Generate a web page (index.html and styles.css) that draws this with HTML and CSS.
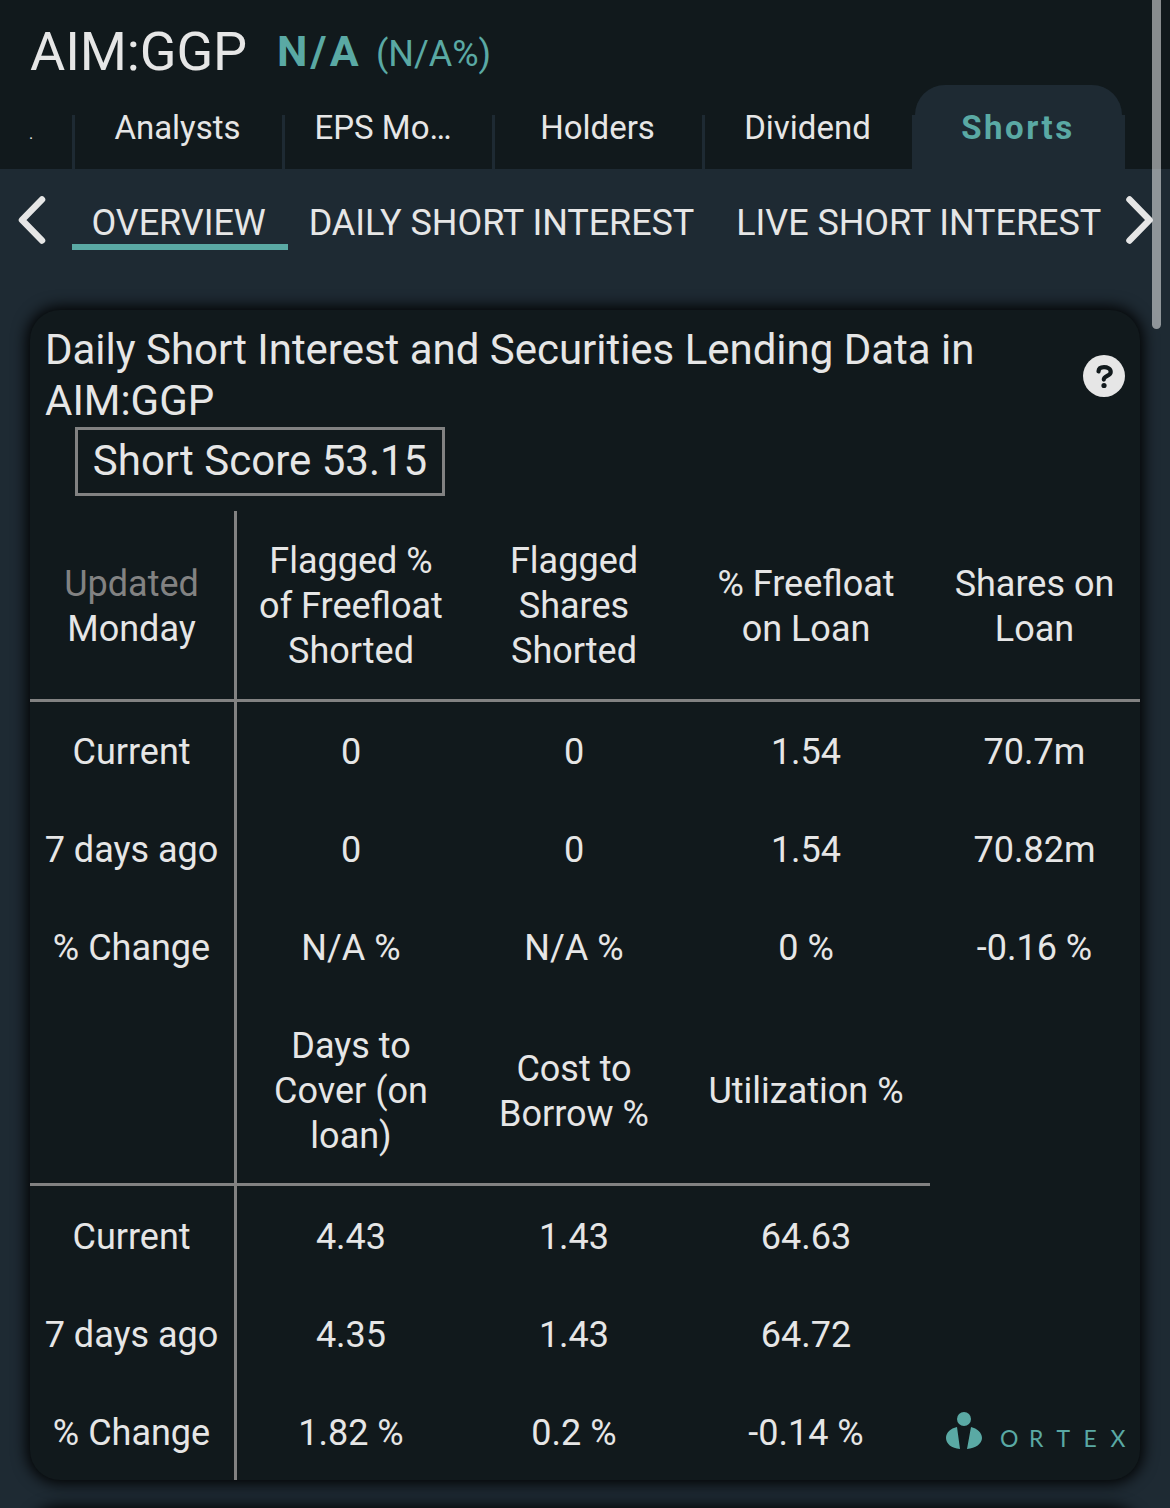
FILE: index.html
```html
<!DOCTYPE html>
<html lang="en">
<head>
<meta charset="utf-8">
<title>AIM:GGP Shorts</title>
<link rel="stylesheet" href="styles.css">
</head>
<body>
<header class="header">
  <div class="quote">
    <h1 class="ticker">AIM:GGP</h1>
    <span class="price">N/A</span>
    <span class="change">(N/A%)</span>
  </div>
  <nav class="tabs">
    <a class="tab tab-cut"><span>.</span></a>
    <a class="tab">Analysts</a>
    <a class="tab tab-eps">EPS Mo…</a>
    <a class="tab">Holders</a>
    <a class="tab">Dividend</a>
    <a class="tab tab-active"><span>Shorts</span></a>
  </nav>
</header>
<nav class="subnav">
  <svg class="arrow" width="28" height="48" viewBox="0 0 28 48"><path d="M24 3.500 4 24l20 20.500"/></svg>
  <div class="links">
    <a class="link link-active">OVERVIEW</a>
    <a class="link">DAILY SHORT INTEREST</a>
    <a class="link">LIVE SHORT INTEREST</a>
  </div>
  <svg class="arrow" width="28" height="48" viewBox="0 0 28 48"><path d="M3.500 3.500 23.500 24 3.500 44.500"/></svg>
</nav>
<main class="content">
  <section class="card">
    <div class="card-head">
      <h2 class="card-title">Daily Short Interest and Securities Lending Data in AIM:GGP</h2>
      <svg class="help" width="42" height="42" viewBox="0 0 42 42"><circle cx="21" cy="21" r="21"/><path d="M15.500 16.500c.2-3 2.300-4.300 5.500-4.300s6.700 1.400 6.700 4.700c0 4.200-6.900 3.700-6.900 7.700"/><circle class="dot" cx="21" cy="30.500" r="2.600"/></svg>
    </div>
    <div class="score">Short Score 53.15</div>
    <table class="data">
      <colgroup><col class="c1"><col class="c2"><col class="c3"><col class="c4"><col class="c5"></colgroup>
      <tbody class="group-first">
      <tr class="head"><th><span class="muted">Updated</span><br>Monday</th><th>Flagged %<br>of Freefloat<br>Shorted</th><th>Flagged<br>Shares<br>Shorted</th><th>% Freefloat<br>on Loan</th><th>Shares on<br>Loan</th></tr>
      <tr><td>Current</td><td>0</td><td>0</td><td>1.54</td><td>70.7m</td></tr>
      <tr><td>7 days ago</td><td>0</td><td>0</td><td>1.54</td><td>70.82m</td></tr>
      <tr><td>% Change</td><td>N/A %</td><td>N/A %</td><td>0 %</td><td>-0.16 %</td></tr>
      </tbody>
      <tbody class="group-second">
      <tr class="head"><th></th><th>Days to<br>Cover (on<br>loan)</th><th>Cost to<br>Borrow %</th><th>Utilization %</th></tr>
      <tr><td>Current</td><td>4.43</td><td>1.43</td><td>64.63</td></tr>
      <tr><td>7 days ago</td><td>4.35</td><td>1.43</td><td>64.72</td></tr>
      <tr><td>% Change</td><td>1.82 %</td><td>0.2 %</td><td>-0.14 %</td></tr>
      </tbody>
    </table>
    <svg class="brand" width="184" height="42" viewBox="0 0 184 42">
      <circle cx="18" cy="8" r="7"/>
      <path d="M11 16 14 38C5.500 37.500 0 32.500 0 27S4.500 17.500 11 16zM25 16 21 38C29.500 37.500 36 32.500 36 27S31 17.500 25 16z"/>
      <text y="36" x="54 83 110.500 137.500 164.500">ORTEX</text>
    </svg>
  </section>
  <section class="card card-next"></section>
</main>
<div class="scrollbar"></div>
</body>
</html>
```
FILE: styles.css
```css
* { box-sizing: border-box; }
body {
  margin: 0;
  height: 1508px;
  overflow: hidden;
  position: relative;
  background: #1e2a33;
  color: #e6e6e6;
  font-family: Roboto, "Liberation Sans", sans-serif;
  font-size: 36px;
}
h1, h2 { margin: 0; font-weight: 400; }
.header { height: 169px; background: #11191c; overflow: hidden; }
.quote { height: 85px; padding: 20px 30px 0; display: flex; align-items: flex-start; }
.ticker { font-size: 54px; line-height: 64px; letter-spacing: -.1px; }
.price { margin-left: 30px; color: #5aa9a4; font-size: 43px; line-height: 63px; font-weight: 700; letter-spacing: 3.2px; }
.change { margin-left: 14px; color: #5aa9a4; line-height: 69px; }
.tabs { display: flex; align-items: flex-end; height: 84px; }
.tab {
  width: 210px;
  height: 54px;
  flex: none;
  padding-right: 2px;
  border-right: 3px solid #1e2a33;
  text-align: center;
  font-size: 33px;
  line-height: 26px;
}
.tab-cut { width: 75px; padding-left: 29px; text-align: left; font-size: 16px; line-height: 37px; }
.tab-eps { padding-right: 11px; }
.tab:nth-child(5) { border-right: 0; width: 207px; }
.tab-active {
  width: 213px;
  height: 84px;
  padding: 0;
  border: 0;
  display: flex;
  background: linear-gradient(#1e2a33, #1e2a33) bottom / 100% 54px no-repeat;
}
.tab-active span {
  flex: 1;
  margin: 0 3px;
  padding: 30px 1px 0 0;
  border-radius: 30px 30px 0 0;
  background: #1e2a33;
  color: #5aa9a4;
  font-weight: 700;
  letter-spacing: 2.5px;
}
.subnav { height: 111px; padding: 27px 16px 0 18px; display: flex; align-items: flex-start; justify-content: space-between; }
.arrow { flex: none; fill: none; stroke: #e6e6e6; stroke-width: 6.5; stroke-linecap: round; stroke-linejoin: round; }
.links { width: 1053px; display: flex; margin: 0 1px 0 25px; }
.link { height: 54px; padding: 0 21px; line-height: 54px; white-space: nowrap; letter-spacing: -.07px; }
.link-active { padding: 0 22px 0 20px; border-bottom: 6px solid #5aa9a4; }
.content { display: grid; align-content: start; gap: 30px; height: 1228px; padding: 30px 30px 0; overflow: hidden; }
.card { position: relative; height: 1170px; border-radius: 30px; background: #11191c; box-shadow: 0 0 15px 3px #000; }
.card-next { height: 60px; }
.card-head { display: flex; justify-content: space-between; align-items: center; padding: 15px 15px 0; height: 117px; }
.card-title { width: 960px; margin-top: -2px; font-size: 42px; line-height: 51px; letter-spacing: -.02px; }
.help { fill: #e6e6e6; }
.help path { fill: none; stroke: #11191c; stroke-width: 4.2; stroke-linecap: round; }
.help .dot { fill: #11191c; }
.score { margin-left: 45px; width: 370px; height: 69px; border: 3px solid #828282; text-align: center; font-size: 42px; line-height: 61px; }
.data { margin-top: 15px; width: 1110px; table-layout: fixed; border-spacing: 0; line-height: 45px; text-align: center; }
.c1 { width: 207px; } .c2 { width: 228px; } .c3 { width: 218px; } .c4 { width: 247px; } .c5 { width: 210px; }
.data th, .data td { padding: 2px 0 0; height: 98px; font-weight: 400; vertical-align: middle; }
.data tr > :first-child { padding-right: 1px; border-right: 3px solid #828282; }
.data tr > :nth-child(4), .data tr > :nth-child(5) { padding-right: 1px; }
.data .head th { height: 191px; padding-top: 3px; border-bottom: 3px solid #828282; }
.data .group-second td { padding-top: 4px; }
.data .group-second th { height: 190px; padding-top: 4px; }
.muted { color: #828282; }
.brand { position: absolute; right: 10px; bottom: 27px; fill: #5aa9a4; font-family: Lato, sans-serif; font-size: 23px; }
.scrollbar { position: absolute; top: 0; left: 1152px; width: 9px; height: 329px; border-radius: 0 0 5px 5px; background: rgba(255,255,255,.5); }
```
